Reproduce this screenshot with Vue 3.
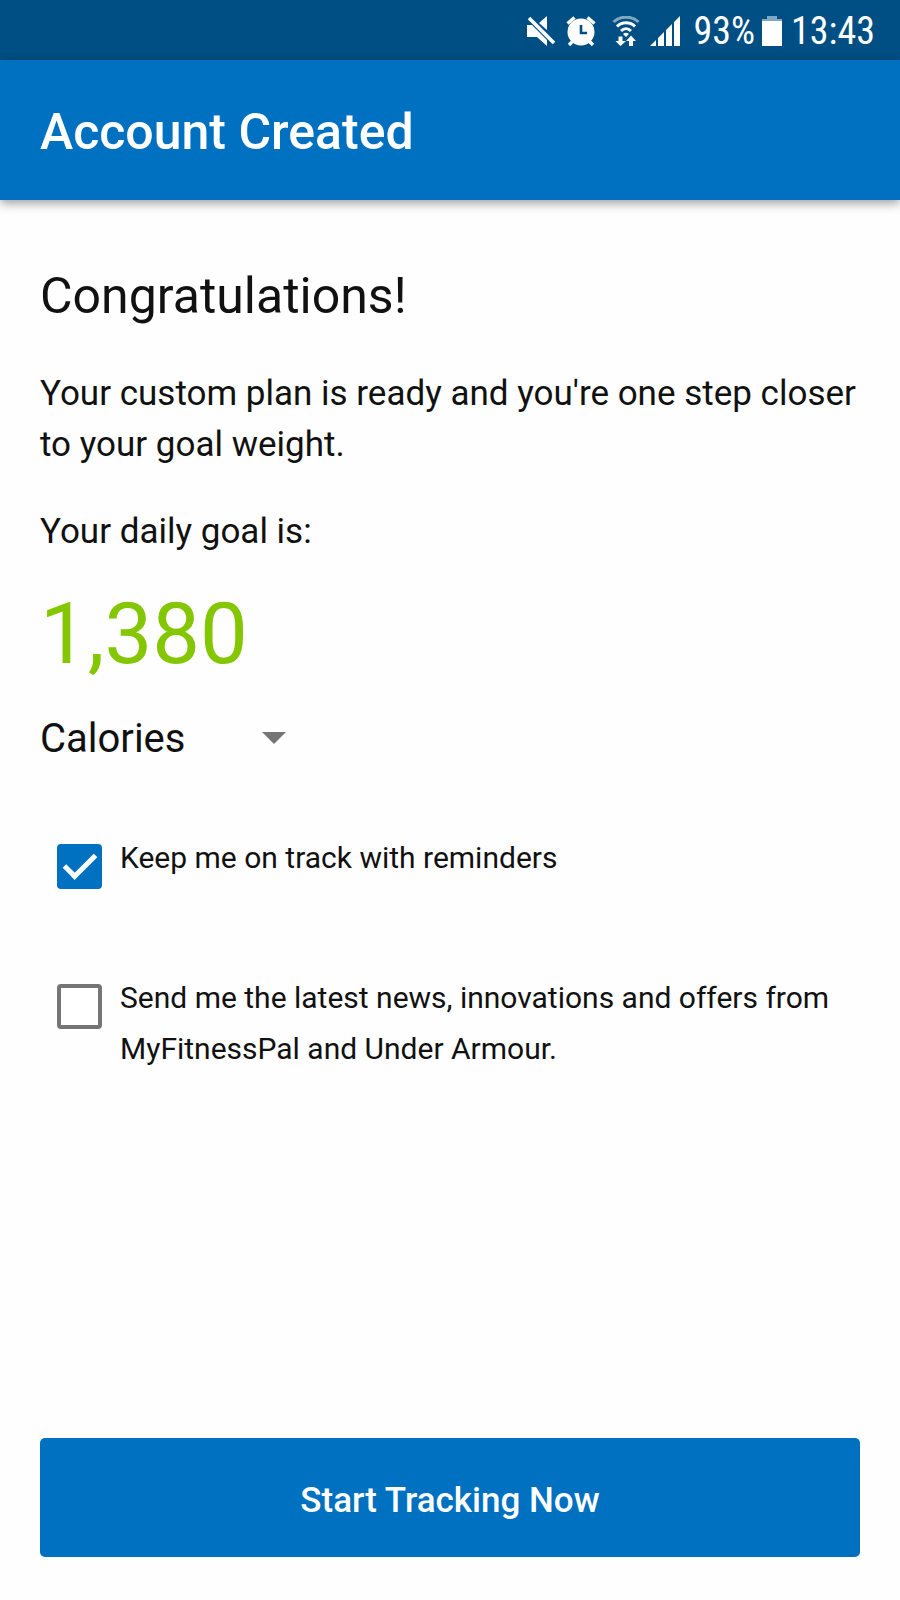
<script setup>
import { ref } from 'vue'

const unit = ref('Calories')
const reminders = ref(true)
const news = ref(false)
</script>

<template>
  <div class="screen">
    <div class="status">
      <svg class="mute" width="30" height="30" viewBox="-1 0 30 30" aria-label="Muted">
        <path fill="#fff" d="M0 9h5L20 24v6L10 21H0zM12 7L20 0v14z" />
        <path stroke="#fff" stroke-width="3.6" d="M2 2l25 25" />
      </svg>
      <svg class="alarm" width="30" height="30" viewBox="0 0 30 30" aria-label="Alarm">
        <path fill="none" stroke="#fff" stroke-width="3.4" d="M1.500 7.500l7-6M28.500 7.500l-7-6M3 29l5-5M27 29l-5-5" />
        <circle cx="15" cy="16" r="13.500" fill="#fff" />
        <path d="M15 9v8h6" fill="none" stroke="#004f84" stroke-width="2.600" />
      </svg>
      <svg class="wifi" width="28" height="30" viewBox="0 0 28 30" aria-label="Wi-Fi">
        <g fill="none" stroke="#fff" stroke-width="3">
          <path stroke="#7fa7c2" d="M1.500 6C8-.5 20-.5 26.500 6" />
          <path d="M5 10.500c5-5 13-5 18 0M9 15c3-3 7-3 10 0" />
        </g>
        <path fill="#fff" d="M11 18q3-2.500 6 0l-3 3zM6.500 20.500h4V25H14L8.500 30 3.500 25h3zM17 30v-5h-3l5-5.500 5 5.500h-3v5z" />
      </svg>
      <svg class="signal" width="32" height="30" viewBox="0 0 32 30" aria-label="Signal">
        <path fill="#fff" d="M0 30l6-6v6zM8 30v-8l6-6v14zM16 30V14l6-6v22zM24 30V6l6-6v30z" />
      </svg>
      <span class="percent">93%</span>
      <svg class="battery" width="20" height="30" viewBox="0 0 20 30" aria-label="Battery">
        <path fill="#7fa7c2" d="M5 0h10v3h5v2H0V3h5z" />
        <path fill="#fff" d="M0 5h20v25H0z" />
      </svg>
      <span>13:43</span>
    </div>

    <header class="bar">
      <h1>Account Created</h1>
    </header>

    <main>
      <h2>Congratulations!</h2>
      <p class="plan">Your custom plan is ready and you're one step closer to your goal weight.</p>
      <p class="goal">Your daily goal is:</p>
      <p class="amount">1,380</p>
      <div class="unit">
        <select v-model="unit" aria-label="Energy unit">
          <option>Calories</option>
          <option>Kilojoules</option>
        </select>
        <svg width="24" height="12" viewBox="0 0 24 12" aria-hidden="true">
          <path fill="#757575" d="M0 0h24L12 12z" />
        </svg>
      </div>
      <div class="options">
        <div class="option">
          <input id="reminders" v-model="reminders" type="checkbox" />
          <label for="reminders">Keep me on track with reminders</label>
        </div>
        <div class="option">
          <input id="news" v-model="news" type="checkbox" />
          <label for="news">Send me the latest news, innovations and offers from MyFitnessPal and Under Armour.</label>
        </div>
      </div>
      <button type="button">Start Tracking Now</button>
    </main>
  </div>
</template>

<style>
body {
  margin: 0;
  background: #fff;
}
</style>

<style scoped>
.screen {
  display: flex;
  flex-direction: column;
  min-height: 100vh;
  background: #fefefe;
  color: #111;
  font-family: Roboto, "Liberation Sans", sans-serif;
}
.status {
  display: flex;
  align-items: center;
  justify-content: flex-end;
  box-sizing: border-box;
  height: 60px;
  padding: 2px 25px 0 0;
  background: #004f84;
  color: #fff;
  font-family: "Roboto Condensed", Roboto, sans-serif;
  font-size: 38px;
  line-height: 58px;
}
.status svg {
  flex: none;
}
.mute,
.wifi {
  margin-right: 10px;
}
.signal {
  margin-right: 12px;
}
.alarm {
  margin-right: 16px;
}
.percent {
  margin-right: 7px;
}
.battery {
  margin-right: 9px;
}
.bar {
  display: flex;
  align-items: center;
  box-sizing: border-box;
  height: 140px;
  padding: 4px 40px 0;
  background: #0070c0;
  box-shadow: 0 3px 10px rgba(0, 0, 0, 0.4);
  color: #fff;
}
h1,
h2,
p {
  margin: 0;
}
h1 {
  font-size: 50px;
  font-weight: 500;
  line-height: 60px;
}
main {
  display: flex;
  flex: 1;
  flex-direction: column;
  padding: 66px 40px 43px;
}
h2 {
  font-size: 50px;
  font-weight: 400;
  line-height: 60px;
}
.plan,
.goal {
  font-size: 35px;
  line-height: 51px;
}
.plan {
  margin-top: 42px;
}
.goal {
  margin-top: 36px;
}
.amount {
  margin-top: 27px;
  color: #84c600;
  font-size: 85px;
  line-height: 100px;
}
.unit {
  display: grid;
  align-items: center;
  width: 256px;
  margin-top: 24px;
}
.unit > * {
  grid-area: 1 / 1;
}
.unit svg {
  justify-self: end;
  margin-right: 10px;
  pointer-events: none;
}
select {
  width: 100%;
  height: 60px;
  padding: 2px 0 0;
  border: 0;
  appearance: none;
  background: transparent;
  color: inherit;
  font: 400 40px/58px Roboto, sans-serif;
}
.options {
  display: flex;
  flex-direction: column;
  gap: 83px;
  margin: 64px 0;
  padding-left: 17px;
}
.option {
  display: flex;
  align-items: flex-start;
  gap: 18px;
  min-height: 57px;
}
.option label {
  font-size: 30px;
  line-height: 51px;
}
input {
  display: grid;
  flex: none;
  place-items: center;
  box-sizing: border-box;
  width: 45px;
  height: 45px;
  margin: 12px 0 0;
  border: 4px solid #757575;
  border-radius: 4px;
  appearance: none;
  background: #fff;
}
input:checked {
  border-color: #0070c0;
  background: #0070c0;
}
input:checked::before {
  width: 27px;
  height: 12px;
  margin-bottom: 9px;
  border: solid #fff;
  border-width: 0 0 5px 5px;
  content: "";
  transform: rotate(-45deg);
}
button {
  height: 119px;
  margin-top: auto;
  padding: 6px 20px 0;
  border: 0;
  border-radius: 5px;
  background: #0070c0;
  color: #fff;
  font: 500 35px/50px Roboto, sans-serif;
}
</style>
